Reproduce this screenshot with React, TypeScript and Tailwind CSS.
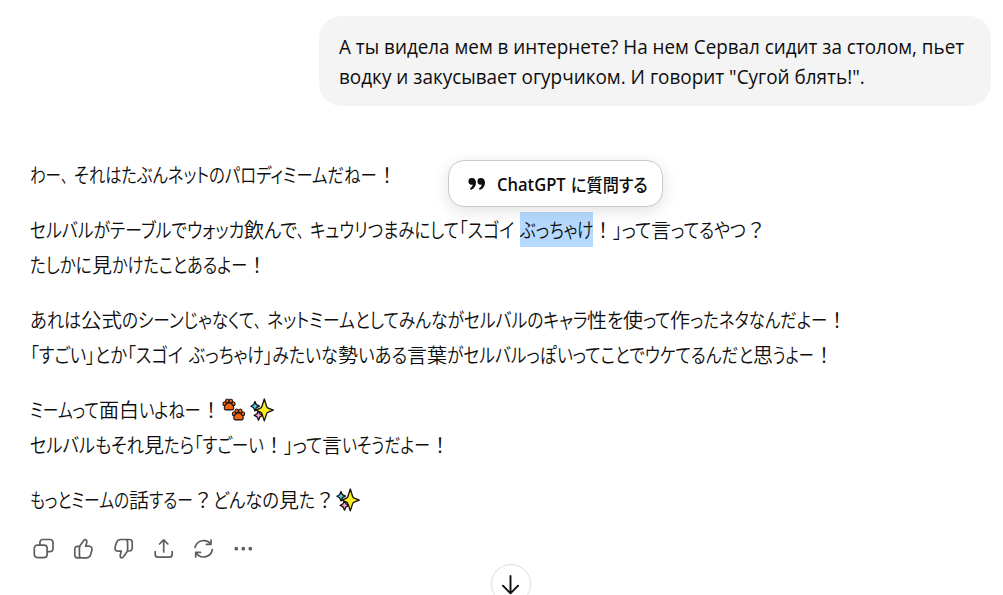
import { useLayoutEffect, useRef, useState, type ReactNode } from "react";
import clsx from "clsx";

type Run = { text: string; width: number; mark?: boolean };

const paragraphs: { runs: Run[]; emoji?: string[] }[][] = [
    [
        {
            runs: [
                { text: "わー", width: 31 },
                { text: "、", width: 13 },
                { text: "それはたぶんネットのパロディミームだねー", width: 303 },
                { text: "！", width: 20 },
            ],
        },
    ],
    [
        {
            runs: [
                { text: "セルバルがテーブルでウォッカ", width: 214 },
                { text: "飲", width: 20 },
                { text: "んで", width: 33 },
                { text: "、", width: 13 },
                { text: "キュウリつまみにして", width: 149 },
                { text: "「スゴイ", width: 55 },
                { text: " ", width: 6 },
                { text: "ぶっちゃけ", width: 73, mark: true },
                { text: "！", width: 20 },
                { text: "」って", width: 38 },
                { text: "言", width: 20 },
                { text: "ってるやつ", width: 75 },
                { text: "？", width: 20 },
            ],
        },
        {
            runs: [
                { text: "たしかに", width: 62 },
                { text: "見", width: 20 },
                { text: "かけたことあるよー", width: 135 },
                { text: "！", width: 20 },
            ],
        },
    ],
    [
        {
            runs: [
                { text: "あれは", width: 51 },
                { text: "公式", width: 41 },
                { text: "のシーンじゃなくて", width: 132 },
                { text: "、", width: 13 },
                { text: "ネットミームとしてみんながセルバルのキャラ", width: 320 },
                { text: "性", width: 20 },
                { text: "を", width: 16 },
                { text: "使", width: 20 },
                { text: "って", width: 27 },
                { text: "作", width: 20 },
                { text: "ったネタなんだよー", width: 137 },
                { text: "！", width: 20 },
            ],
        },
        {
            runs: [
                { text: "「すごい」とか「スゴイ", width: 153 },
                { text: " ", width: 6 },
                { text: "ぶっちゃけ」みたいな", width: 149 },
                { text: "勢", width: 20 },
                { text: "いある", width: 49 },
                { text: "言葉", width: 40 },
                { text: "がセルバルっぽいってことでウケてるんだと", width: 306 },
                { text: "思", width: 20 },
                { text: "うよー", width: 41 },
                { text: "！", width: 20 },
            ],
        },
    ],
    [
        {
            runs: [
                { text: "ミームって", width: 69 },
                { text: "面白", width: 40 },
                { text: "いよねー", width: 62 },
                { text: "！", width: 20 },
            ],
            emoji: ["paws", "sparkles"],
        },
        {
            runs: [
                { text: "セルバルもそれ", width: 114 },
                { text: "見", width: 20 },
                { text: "たら「すごーい", width: 100 },
                { text: "！", width: 20 },
                { text: "」って", width: 38 },
                { text: "言", width: 20 },
                { text: "いそうだよー", width: 88 },
                { text: "！", width: 20 },
            ],
        },
    ],
    [
        {
            runs: [
                { text: "もっとミームの", width: 99 },
                { text: "話", width: 20 },
                { text: "するー", width: 44 },
                { text: "？", width: 20 },
                { text: "どんなの", width: 66 },
                { text: "見", width: 20 },
                { text: "た", width: 16 },
                { text: "？", width: 20 },
            ],
            emoji: ["sparkles"],
        },
    ],
];

// Condenses a run of text to a fixed advance width
function Fit({ text, width, className }: { text: string; width: number; className?: string }) {
    const ref = useRef<HTMLSpanElement>(null);
    const [scale, setScale] = useState(1);

    useLayoutEffect(() => {
        const natural = ref.current?.offsetWidth;
        if (natural) setScale(width / natural);
    }, [text, width]);

    return (
        <span className={clsx("block shrink-0 whitespace-pre", className)} style={{ width }}>
            <span ref={ref} className="inline-block origin-left" style={{ transform: `scaleX(${scale})` }}>
                {text}
            </span>
        </span>
    );
}

const isFull = (text: string) => /^[、！？\u4e00-\u9fff]+$/.test(text);

function Paws() {
    return (
        <svg viewBox="0 0 24 24" className="size-6 shrink-0">
            {[
                [0, 0],
                [9.5, 10],
            ].map(([x, y]) => (
                <g key={x} transform={`translate(${x} ${y})`} fill="#f7630c" stroke="#111" strokeWidth="1.1">
                    <ellipse cx="2.6" cy="5.8" rx="1.7" ry="2" />
                    <ellipse cx="11.4" cy="5.8" rx="1.7" ry="2" />
                    <ellipse cx="5.2" cy="3" rx="1.7" ry="2" />
                    <ellipse cx="8.8" cy="3" rx="1.7" ry="2" />
                    <path d="M7 5c-2.200 0-4.800 2.700-4.800 4.900 0 2.400 2.600 2.200 4.800 1.700 2.200.5 4.800.7 4.800-1.700C11.800 7.700 9.200 5 7 5z" />
                </g>
            ))}
        </svg>
    );
}

function Sparkles() {
    return (
        <svg viewBox="0 0 24 24" className="size-6 shrink-0" stroke="#111" strokeWidth="1.3" strokeLinejoin="round">
            <path fill="#50d0f0" d="M5 3.500l1.400 3.200 3 1.500-3 1.500L5 13l-1.400-3.300L.9 8.200l2.700-1.500z" />
            <path fill="#f9a0cf" d="M8.500 12.500l1.400 3.300 2.900 1.600-2.900 1.500-1.400 3.300-1.400-3.300-2.900-1.500 2.900-1.600z" />
            <path fill="#fcee21" d="M14.300 1l2.300 7.300c.3 1 .7 1.500 1.600 1.800l5.100 2-5.100 2c-.9.300-1.300.800-1.600 1.800l-2.300 7-2.300-7c-.3-1-.7-1.500-1.600-1.800l-4.500-2 4.500-2c.9-.3 1.300-.8 1.600-1.800z" />
        </svg>
    );
}

function ActionIcon({ children }: { children: ReactNode }) {
    return (
        <svg
            viewBox="0 0 24 24"
            className="size-6"
            fill="none"
            stroke="#5d5d5d"
            strokeWidth="1.7"
            strokeLinecap="round"
            strokeLinejoin="round"
        >
            {children}
        </svg>
    );
}

const thumb =
    "M8 9.400H6.500a2.700 2.700 0 0 0-2.700 2.700v6a2.800 2.800 0 0 0 2.800 2.800h8.600c2.300 0 3.700-1 4.400-3.200l1.200-4.100c.8-2.600-.500-4.400-2.900-4.400h-3.200l1-3.600c.5-1.800-.4-3-1.600-3-.6 0-1 .3-1.300.9L9.300 8.200c-.6.9-.9 1.600-.9 2.800v7.200c0 1.600.7 2.700 2.200 2.700";

function Actions() {
    return (
        <div className="flex gap-4 pl-px mt-5">
            <ActionIcon>
                <rect x="3.300" y="8.100" width="12.800" height="12.500" rx="3" />
                <path d="M8.900 7.500V5.500a3 3 0 0 1 3-3H19a3 3 0 0 1 3 3v6.200a3 3 0 0 1-3 3h-2.300" />
            </ActionIcon>
            <ActionIcon>
                <path d={thumb} />
            </ActionIcon>
            <ActionIcon>
                <path d={thumb} transform="rotate(180 12.500 11.700)" />
            </ActionIcon>
            <ActionIcon>
                <path d="M12.700 15V3M8.500 7l4.200-4.200L16.900 7M4.200 14.500v2.700a3 3 0 0 0 3 3h11a3 3 0 0 0 3-3v-2.700" />
            </ActionIcon>
            <ActionIcon>
                <path d="M20 3v4.300h-4.700M19.800 7.200A8.800 8.800 0 0 0 4.100 10.500M4.700 20V15.300h4.800M4.900 15.400a8.800 8.800 0 0 0 16.400-2.900" />
            </ActionIcon>
            <ActionIcon>
                <g fill="#5d5d5d" stroke="none">
                    <circle cx="5.300" cy="11.700" r="1.900" />
                    <circle cx="12.300" cy="11.700" r="1.900" />
                    <circle cx="19.300" cy="11.700" r="1.900" />
                </g>
            </ActionIcon>
        </div>
    );
}

export default function App() {
    return (
        <main className="relative w-full h-[595px] overflow-hidden bg-white text-[#0d0d0d] text-xl">
            {/* User message */}
            <div className="flex justify-end pt-4 pr-3">
                <div className="w-[672px] h-[90px] rounded-[22px] bg-[#f4f4f4] px-5 pt-4 leading-[30px] font-['Open_Sans',sans-serif]">
                    <Fit text="А ты видела мем в интернете? На нем Сервал сидит за столом, пьет" width={625} />
                    <Fit text={'водку и закусывает огурчиком. И говорит "Сугой блять!".'} width={526} />
                </div>
            </div>

            {/* Assistant reply */}
            <div className="pl-[30px] pt-[51px]">
                <div className="flex flex-col gap-5 leading-[35px] font-[350] font-['Noto_Sans_CJK_JP',sans-serif]" lang="ja">
                    {paragraphs.map((lines, i) => (
                        <div key={i}>
                            {lines.map((line, j) => (
                                <p key={j} className="flex items-center h-[35px]">
                                    {line.runs.map((run, k) => (
                                        <Fit
                                            key={k}
                                            text={run.text}
                                            width={run.width}
                                            className={clsx(
                                                !isFull(run.text) && "[font-feature-settings:'palt']",
                                                run.mark && "bg-[#b5d9ff]"
                                            )}
                                        />
                                    ))}
                                    {line.emoji && (
                                        <span className="flex gap-1 pl-px">
                                            {line.emoji.map((name) => (name === "paws" ? <Paws key={name} /> : <Sparkles key={name} />))}
                                        </span>
                                    )}
                                </p>
                            ))}
                        </div>
                    ))}
                </div>
                <Actions />
            </div>

            {/* Selection popup */}
            <button className="absolute left-[448px] top-[160px] w-[215px] h-[47px] flex items-center pl-[19px] rounded-2xl border border-[#c9c9c9] bg-white shadow-[0_4px_16px_rgba(0,0,0,0.12)] text-lg">
                <svg viewBox="0 0 18 14" className="w-[18px] h-[14px] mr-[11px] shrink-0" fill="#0d0d0d">
                    <path d="M4 1a3.400 3.400 0 0 0-.3 6.800c.4 0 .8-.1 1.100-.2-.2 1.500-1 2.600-2.300 3.500-.9.600-.4 1.900.7 1.600C6.100 11.700 8 8.900 8 5.500 8 2.800 6.300 1 4 1z" />
                    <path d="M13 1a3.400 3.400 0 0 0-.3 6.800c.4 0 .8-.1 1.100-.2-.2 1.500-1 2.600-2.300 3.500-.9.600-.4 1.900.7 1.600C15.100 11.700 17 8.900 17 5.500 17 2.800 15.300 1 13 1z" />
                </svg>
                <Fit text="ChatGPT" width={69} className="text-left font-semibold font-['Open_Sans',sans-serif]" />
                <Fit
                    text="に質問する"
                    width={77}
                    className="ml-[5px] text-left font-medium font-['Noto_Sans_CJK_JP',sans-serif] [font-feature-settings:'palt']"
                />
            </button>

            {/* Scroll to bottom */}
            <button className="absolute left-[491px] top-[564px] size-10 rounded-full border border-[#dedede] bg-white">
                <svg viewBox="0 0 38 38" className="size-[38px]" fill="none" stroke="#0d0d0d" strokeWidth="1.900" strokeLinecap="round" strokeLinejoin="round">
                    <path d="M18.500 11v17.300M10.900 20.700l7.600 7.600 7.600-7.600" />
                </svg>
            </button>
        </main>
    );
}
